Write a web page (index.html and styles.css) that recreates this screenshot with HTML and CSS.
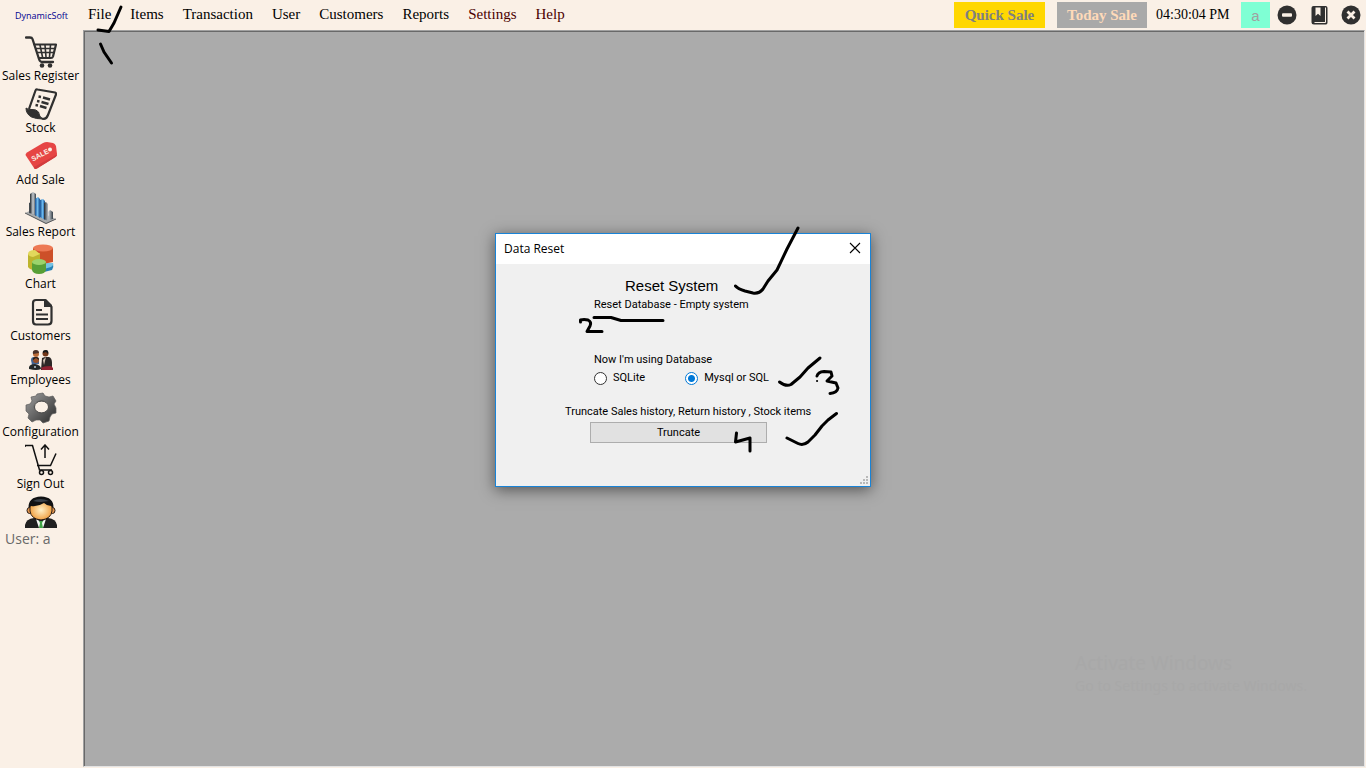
FILE: index.html
```html
<!DOCTYPE html>
<html lang="en">
<head>
<meta charset="utf-8">
<title>DynamicSoft</title>
<link rel="stylesheet" href="styles.css">
</head>
<body>
<div class="app">
  <header class="topbar">
    <div class="logo">DynamicSoft</div>
    <nav class="menu">
      <a href="#">File</a><a href="#">Items</a><a href="#">Transaction</a><a href="#">User</a><a href="#">Customers</a><a href="#">Reports</a><a href="#" class="maroon">Settings</a><a href="#" class="maroon">Help</a>
    </nav>
    <div class="tools">
      <button class="sale quick">Quick Sale</button>
      <button class="sale today">Today Sale</button>
      <time class="clock">04:30:04 PM</time>
      <button class="user-tag">a</button>
      <button class="round" aria-label="Minimize"><svg width="20" height="20" viewBox="0 0 20 20"><circle cx="10" cy="10" r="9.5" fill="#303030"/><rect x="5" y="8.3" width="10" height="3.4" rx="1" fill="#faf0e6"/></svg></button>
      <button class="round" aria-label="Bookmark"><svg width="20" height="20" viewBox="0 0 20 20"><path d="M4.500 1H17Q18.500 1.500 18.500 3V17.500Q18.500 19.500 17 19.500H5Q2.500 19.500 2.500 17V3Q2.500 1 4.500 1Z" fill="#303030"/><path d="M16.500 2.500V17.500H5.500" fill="none" stroke="#faf0e6" stroke-width="1"/><path d="M6.500 2.500H11.500V11L9 8.800L6.500 11Z" fill="#faf0e6"/></svg></button>
      <button class="round" aria-label="Close"><svg width="20" height="20" viewBox="0 0 20 20"><circle cx="10" cy="10" r="9.500" fill="#303030"/><path d="M6.500 6.500L13.500 13.500M13.500 6.500L6.500 13.500" stroke="#faf0e6" stroke-width="2.800"/></svg></button>
    </div>
  </header>
  <div class="main">
    <aside class="sidebar">
      <a href="#" class="tool"><svg width="32" height="32" viewBox="0 0 32 32" fill="none" stroke="#303030" stroke-linecap="round" stroke-linejoin="round"><path d="M1 1.500H5Q7 1.500 7.500 3L14 23Q15 26 17 26H28" stroke-width="2.300"/><path d="M9.500 8.500H31L28 20.500Q27.500 22 26 22H14" stroke-width="2.200"/><path d="M11 12.500H29M12 16.500H28M15 9L17.500 21M20 9L21 21M25.500 9L24.500 21" stroke-width="1.600"/><circle cx="17" cy="29.500" r="2.300" fill="#303030" stroke="none"/><circle cx="25" cy="29.500" r="2.300" fill="#303030" stroke="none"/></svg><span>Sales Register</span></a>
      <a href="#" class="tool"><svg width="32" height="32" viewBox="0 0 32 32" fill="none" stroke="#303030"><path d="M4 21L10.500 2.500Q11 1 12.500 1.500L30 4.500Q31.500 5 31 6.500L23 27Q21 32 17 30.500" stroke-width="2.200"/><path d="M1 20Q3 22 7 21.500Q11 21 13.500 24Q14 29 18 31Q11 31 6.500 29Q1 26 1 20Z" fill="#303030"/><path d="M13.500 8.500L16 9M18 9.500L25 11.500M12 13L14.500 13.500M16.500 14L23.500 16M10.500 17L13 17.500M15 18L21.500 20" stroke-width="2.400"/></svg><span>Stock</span></a>
      <a href="#" class="tool"><svg width="32" height="32" viewBox="0 0 32 32"><path d="M.500 15Q.5 13.500 2 12.500L18 3Q20 2 22 2L28 3Q30 3.500 31 6L32 14Q32 16 30.500 17L12 28.500Q10 29.500 9 28Z" fill="#e64544"/><path d="M9 27L32 14.500Q32 16 30.500 17L12 28.500Q10 29.500 9 28Z" fill="#d23c3e"/><circle cx="25" cy="9.500" r="2" fill="#faf0e6"/><text x="8" y="21.500" transform="rotate(-28 8 21.500)" font-family="Liberation Sans, sans-serif" font-size="7" font-weight="bold" fill="#faf0e6">SALE</text></svg><span>Add Sale</span></a>
      <a href="#" class="tool"><svg width="32" height="32" viewBox="0 0 32 32"><defs><linearGradient id="steel"><stop stop-color="#22292f"/><stop offset=".5" stop-color="#c8cdd2"/><stop offset="1" stop-color="#343d45"/></linearGradient><linearGradient id="blue"><stop stop-color="#174e91"/><stop offset=".5" stop-color="#6ab8ed"/><stop offset="1" stop-color="#174f91"/></linearGradient></defs><path d="M0 21L9 17L31 27L21 32Z" fill="#a9acad"/><path d="M0 21L21 31.500L31 27" fill="none" stroke="#57595b"/><path d="M4 11L6 10L9 11V23L4 21Z" fill="url(#steel)"/><path d="M5 2L8 0L11 2V24L5 21Z" fill="url(#steel)"/><path d="M10 7L13 5L15 7V26L10 23Z" fill="url(#blue)"/><path d="M15 8L18 7L20 9V28L15 25Z" fill="url(#blue)"/><path d="M19 11L21 10L23 12V29L19 27ZM23 20L25 18L28 20V27L24 28Z" fill="url(#steel)"/></svg><span>Sales Report</span></a>
      <a href="#" class="tool"><svg width="32" height="32" viewBox="0 0 32 32"><path d="M19 20V28L27 26Q29 23 28 19Z" fill="#2581b5"/><path d="M18 21L22 19H28Q29 21 26 23L19 25Z" fill="#75c4e5"/><path d="M8 4V13L18 20L28 18V4Z" fill="#cd5029"/><ellipse cx="18" cy="4" rx="10" ry="3.500" fill="#ed7954"/><path d="M3 10V23Q5 26 9 26L15 18V9Z" fill="#bdb42d"/><path d="M3 10Q3 6 10 6L15 10L8 13Q3 12 3 10Z" fill="#e2d85c"/><path d="M7 18V26Q8 30 14 30Q20 30 21 26V18Z" fill="#579f37"/><ellipse cx="14" cy="18" rx="7" ry="3" fill="#9bd36c"/></svg><span>Chart</span></a>
      <a href="#" class="tool"><svg width="32" height="32" viewBox="0 0 32 32"><path d="M11 4H20L26.500 11V25Q26.500 28.500 23 28.500H11Q8 28.500 8 25V7Q8 4 11 4Z" fill="none" stroke="#303030" stroke-width="2.200"/><path d="M19 4V11H27V9L21 3Z" fill="#303030"/><path d="M11 14H17M11 18.500H23M11 23H23" stroke="#303030" stroke-width="2"/></svg><span>Customers</span></a>
      <a href="#" class="tool"><svg width="24" height="24" viewBox="0 0 24 24"><circle cx="7" cy="6" r="3" fill="#ba6b38"/><circle cx="16.500" cy="5.500" r="3" fill="#733719"/><path d="M4 6Q3 2 7 2Q10 2 10 5Z" fill="#493028"/><path d="M14 5Q13 2 17 2Q20 2 19 6L17 4Z" fill="#17191b"/><path d="M2 12Q2 9 5 9L10 10V16L3 17Z" fill="#426493"/><path d="M13 10L16 9H20Q23 10 23 15V22H12Z" fill="#2c2726"/><path d="M14 12L17 9L15 17Z" fill="#d4c4b5"/><circle cx="7" cy="12" r="3" fill="#965029"/><path d="M4 12Q3 9 7 9Q10 9 10 12L7 10Z" fill="#231d1b"/><path d="M0 21V19Q1 16 6 16Q12 17 12 21Q8 23 0 21Z" fill="#222728"/><path d="M12 20Q14 18 22 18L24 20V22H13Z" fill="#8e2030"/><circle cx="6" cy="19" r="1" fill="#b9c8d2"/></svg><span>Employees</span></a>
      <a href="#" class="tool"><svg width="32" height="32" viewBox="0 0 32 32"><defs><linearGradient id="gear" x2="1" y2="1"><stop stop-color="#a2a2a2"/><stop offset=".5" stop-color="#656565"/><stop offset="1" stop-color="#292929"/></linearGradient></defs><path fill-rule="evenodd" d="M12 2L18 1L20 4L24 5L28 4L31 9L29 12L31 16L31 21L27 22L25 25L24 29L18 31L15 28L11 28L7 30L3 26L4 22L1 19V13L5 12L7 9L6 5L11 4ZM17 9Q9 9 9 15Q10 21 17 21Q23 20 24 15Q23 9 17 9Z" fill="url(#gear)" stroke="#5b5b5b" stroke-width=".7" stroke-linejoin="round"/><ellipse cx="16.500" cy="15" rx="7" ry="6" fill="none" stroke="#4a4a4a"/></svg><span>Configuration</span></a>
      <a href="#" class="tool"><svg width="32" height="32" viewBox="0 0 32 32" fill="none" stroke="#111" stroke-width="1.500"><path d="M0 3V1.500H7.500L14.500 26H27M12 21.500H25.500L31 9.500M20 14V1M16 5.500L20 1L24 5.500"/><circle cx="16.500" cy="28.500" r="2"/><circle cx="25.500" cy="28.500" r="2"/></svg><span>Sign Out</span></a>
      <a href="#" class="tool account"><svg width="32" height="32" viewBox="0 0 32 32"><defs><radialGradient id="face"><stop stop-color="#fff1c8"/><stop offset="1" stop-color="#f0a246"/></radialGradient></defs><path d="M0 32V29Q1 23 9 22H23Q31 23 32 29V32Z" fill="#202020"/><path d="M11 23L16 26L21 23L18 32H14Z" fill="#f6f8f5"/><path d="M14 25H18L17 27L18 32H14L15 27Z" fill="#42a547"/><ellipse cx="4.500" cy="14.500" rx="2.500" ry="3" fill="#e4954d" stroke="#251b16"/><ellipse cx="27.500" cy="14.500" rx="2.500" ry="3" fill="#e4954d" stroke="#251b16"/><path d="M5 10Q6 4 16 4Q26 4 27 10V15Q26 23 16 24Q6 23 5 15Z" fill="url(#face)" stroke="#2b1c12"/><path d="M3.500 12Q3 1 16 .500Q29 1 28.500 12L26 10Q22 10 19 7Q13 11 6 10Z" fill="#101113"/><path d="M8 5Q15 1 24 5L16 6Q12 6 8 5Z" fill="#39414a"/></svg><span>User: a</span></a>
    </aside>
    <main class="workspace">
      <div class="watermark"><p class="activate">Activate Windows</p><p class="hint">Go to Settings to activate Windows.</p></div>
    </main>
  </div>
  <section class="dialog" role="dialog" aria-labelledby="dialog-title">
    <div class="titlebar">
      <span id="dialog-title">Data Reset</span>
      <button class="close" aria-label="Close dialog"><svg width="12" height="12" viewBox="0 0 12 12"><path d="M1 1L11 11M11 1L1 11" stroke="#000" stroke-width="1.100"/></svg></button>
    </div>
    <form class="body">
      <h1>Reset System</h1>
      <p class="sub">Reset Database - Empty system</p>
      <fieldset>
        <legend>Now I'm using Database</legend>
        <div class="choices">
          <label><input type="radio" name="db">SQLite</label>
          <label><input type="radio" name="db" checked>Mysql or SQL</label>
        </div>
      </fieldset>
      <p class="note">Truncate Sales history, Return history , Stock items</p>
      <button type="button" class="truncate">Truncate</button>
    </form>
    <svg class="grip" width="8" height="8" viewBox="0 0 8 8" fill="#b9b9b9"><path d="M6 0h2v2H6zM3 3h2v2H3zM6 3h2v2H6zM0 6h2v2H0zM3 6h2v2H3zM6 6h2v2H6z"/></svg>
  </section>
  <svg class="ink" width="1366" height="768" viewBox="0 0 1366 768" fill="none" stroke="#000" stroke-width="3" stroke-linecap="round" stroke-linejoin="round" aria-hidden="true">
    <path d="M98 30L109 31.500L114 23L121 7M100.500 44L104 52L111.500 63"/>
    <path d="M735.500 286Q738 289 745 291L753 293Q759 294 763 289L768 281L777 270L787 249L798 228"/>
    <path d="M580.500 322V320Q584 319 588 320Q592 322 590 326L587 331.500H602M594 317.500H611L621 320.500H663"/>
    <path d="M779.500 382Q786 387 791 384.500L800 377L808 368L820 358M817 376Q818 372 824 371.500L831 372L832 376L827 381L836 383L838 388Q837 393 830 393.500"/>
    <path d="M817 381h.1" stroke-width="2"/>
    <path d="M787 438L798 443.500Q803 446 808 442L815 435L822 426L828 420L836.500 413.500M736.500 433L735.500 442L750 438V451"/>
  </svg>
</div>
</body>
</html>
```
FILE: styles.css
```css
* { box-sizing: border-box; }
body { margin: 0; background: #faf0e6; color: #000; font-family: "Liberation Sans", sans-serif; }
button { border: 0; padding: 0; font: inherit; }
p, h1, fieldset { margin: 0; }
a { color: inherit; text-decoration: none; }
svg { display: block; flex: none; }

.app { position: relative; display: flex; flex-direction: column; min-height: 100vh; overflow: hidden; }

.topbar { display: flex; align-items: center; height: 30px; font-family: "Liberation Serif", serif; font-size: 15px; }
.logo { width: 83px; text-align: center; color: #000090; font: 9px "Open Sans", sans-serif; }
.menu { display: flex; gap: 19px; padding: 0 0 2px 5px; }
.maroon { color: #4b0000; }
.tools { display: flex; align-items: center; margin-left: auto; padding-right: 5px; }
.sale { height: 26px; width: 91px; font-weight: bold; margin-right: 12px; }
.quick { background: #ffd700; color: #808080; }
.today { background: #a9a9a9; color: #ffdab9; width: 90px; margin-right: 9px; }
.clock { font-size: 14px; width: 85px; }
.user-tag { width: 29px; height: 26px; margin-right: 7px; background: #7fffd4; color: #a0a0a0; font: 15px "Liberation Sans", sans-serif; }
.round { background: none; margin-right: 12px; }
.round:last-child { margin-right: 0; }

.main { display: flex; flex: 1; }
.sidebar { width: 83px; flex: none; padding: 6px 2px 0 0; display: flex; flex-direction: column; gap: 4px; }
.tool { display: flex; flex-direction: column; align-items: center; font: 12px/16px "Open Sans", sans-serif; white-space: nowrap; }
.account { font-size: 14px; line-height: 22px; color: #696969; }
.account span { align-self: flex-start; padding-left: 5px; }
.workspace { flex: 1; display: flex; flex-direction: column; justify-content: flex-end; align-items: flex-end; margin: 0 1px 1px 0; background: #ababab; border: 1px solid #a0a0a0; border-right-color: #e3e3e3; border-bottom-color: #e3e3e3; box-shadow: inset 1px 1px #696969; }
.watermark { padding: 0 57px 70px 0; color: #a8a8a8; font-family: "Noto Sans", sans-serif; }
.activate { font-size: 19px; line-height: 26px; }
.hint { font-size: 14px; line-height: 20px; }

.dialog { position: absolute; left: calc(50% - 188px); top: calc(50% - 151px); width: 376px; height: 254px; background: #f0f0f0; border: 1px solid #1883d7; box-shadow: 0 3px 14px rgba(0, 0, 0, .5); font-family: Roboto, sans-serif; font-size: 11px; }
.titlebar { display: flex; align-items: center; justify-content: space-between; height: 30px; padding: 0 9px 2px 8px; background: #fff; font: 12px "Open Sans", sans-serif; }
.close { background: none; }
.body { padding-top: 13px; line-height: 14px; }
h1 { padding-left: 129px; font: 15px/18px "Liberation Sans", sans-serif; }
.sub { padding: 3px 0 0 98px; }
fieldset { border: 0; padding: 0; margin: 41px 0 0 98px; }
legend { padding: 0; }
.choices { display: flex; gap: 40px; padding-top: 4px; }
label { display: flex; align-items: center; gap: 6px; }
input { appearance: none; width: 13px; height: 13px; margin: 0; border: 1px solid #333; border-radius: 50%; background: #fff; }
input:checked { border-color: #0078d7; background: radial-gradient(circle, #0078d7 0 3px, #fff 4px); }
.note { padding: 20px 0 0 69px; }
.truncate { display: block; width: 177px; height: 21px; margin: 3px 0 0 94px; border: 1px solid #adadad; background: #e1e1e1; }
.grip { position: absolute; right: 2px; bottom: 2px; }
.ink { position: absolute; left: 0; top: 0; pointer-events: none; }
```
